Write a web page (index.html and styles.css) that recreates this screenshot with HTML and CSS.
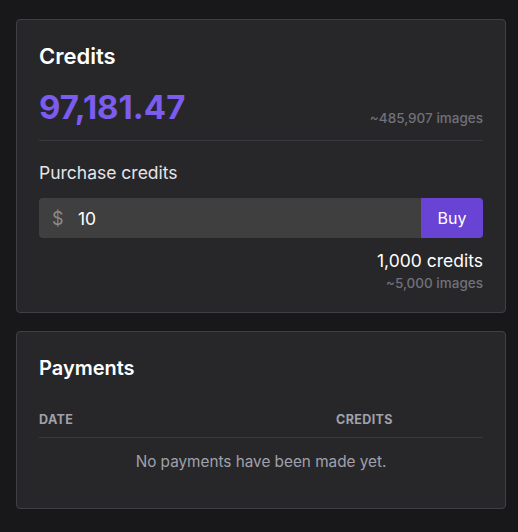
FILE: index.html
```html
<!DOCTYPE html>
<html>
<head>
<meta charset="utf-8">
<link rel="stylesheet" href="styles.css">
</head>
<body>
<main class="page">
  <section class="card card-credits">
    <h2 class="card-title card-title-lg">Credits</h2>
    <div class="balance-row">
      <div class="balance">97,181.47</div>
      <div class="balance-sub">~485,907 images</div>
    </div>
    <div class="divider"></div>
    <div class="purchase-label">Purchase credits</div>
    <div class="input-group">
      <div class="input">
        <span class="currency">$</span>
        <span class="amount">10</span>
      </div>
      <button class="buy">Buy</button>
    </div>
    <div class="summary">
      <div class="summary-credits">1,000 credits</div>
      <div class="summary-images">~5,000 images</div>
    </div>
  </section>
  <section class="card card-payments">
    <h2 class="card-title">Payments</h2>
    <div class="table">
      <div class="thead">
        <div class="th">Date</div>
        <div class="th">Credits</div>
      </div>
      <div class="empty">No payments have been made yet.</div>
    </div>
  </section>
</main>
</body>
</html>
```
FILE: styles.css
```css
* { box-sizing: border-box; }
html, body {
  margin: 0;
  background: #18181b;
  font-family: Inter, "Noto Sans", sans-serif;
  color: #fafafa;
}
.page {
  padding: 19px 12px 0 16px;
  display: flex;
  flex-direction: column;
  gap: 18px;
}
.card {
  width: 490px;
  background: #27272a;
  border: 1px solid #3f3f46;
  border-radius: 4px;
  padding: 22px 22px 23px;
}
.card-credits {
  padding-bottom: 20px;
}
.card-title {
  margin: 0;
  font-size: 20px;
  line-height: 28px;
  font-weight: 600;
  color: #ffffff;
}
.card-title-lg {
  font-size: 22px;
}
.balance-row {
  display: flex;
  justify-content: space-between;
  align-items: flex-end;
  margin-top: 17px;
  padding-bottom: 13px;
}
.balance {
  font-size: 33px;
  line-height: 40px;
  font-weight: 700;
  color: #7b5cef;
}
.balance-sub {
  font-size: 13.5px;
  line-height: 18px;
  font-weight: 500;
  color: #71717a;
}
.divider {
  height: 1px;
  background: #3a3a3e;
}
.purchase-label {
  margin-top: 20px;
  font-size: 17.5px;
  line-height: 24px;
  color: #e4e4e7;
}
.input-group {
  display: flex;
  margin-top: 13px;
  height: 40px;
}
.input {
  flex: 1;
  display: flex;
  align-items: center;
  background: #3f3f3f;
  border-radius: 4px 0 0 4px;
  padding-left: 13px;
  font-size: 17.5px;
}
.currency {
  color: #8a8a8a;
  width: 26px;
  font-size: 18px;
}
.amount {
  color: #ffffff;
}
.buy {
  width: 62px;
  border: none;
  background: #6944d4;
  color: #ffffff;
  font-family: inherit;
  font-size: 16px;
  border-radius: 0 4px 4px 0;
  padding: 0;
}
.summary {
  margin-top: 9px;
  text-align: right;
}
.summary-credits {
  font-size: 17.5px;
  line-height: 27px;
  color: #ffffff;
}
.summary-images {
  font-size: 13.5px;
  line-height: 18px;
  font-weight: 500;
  color: #71717a;
}
.card-payments {
  padding-bottom: 35px;
}
.table {
  margin-top: 30px;
}
.thead {
  display: grid;
  grid-template-columns: 297px 1fr;
  padding-bottom: 9px;
  border-bottom: 1px solid #3a3a3e;
}
.th {
  font-size: 12.5px;
  line-height: 16px;
  font-weight: 700;
  text-transform: uppercase;
  color: #a1a1aa;
  letter-spacing: 0.4px;
}
.empty {
  text-align: center;
  font-size: 15.3px;
  line-height: 22px;
  color: #a1a1aa;
  padding-top: 13px;
}
```
